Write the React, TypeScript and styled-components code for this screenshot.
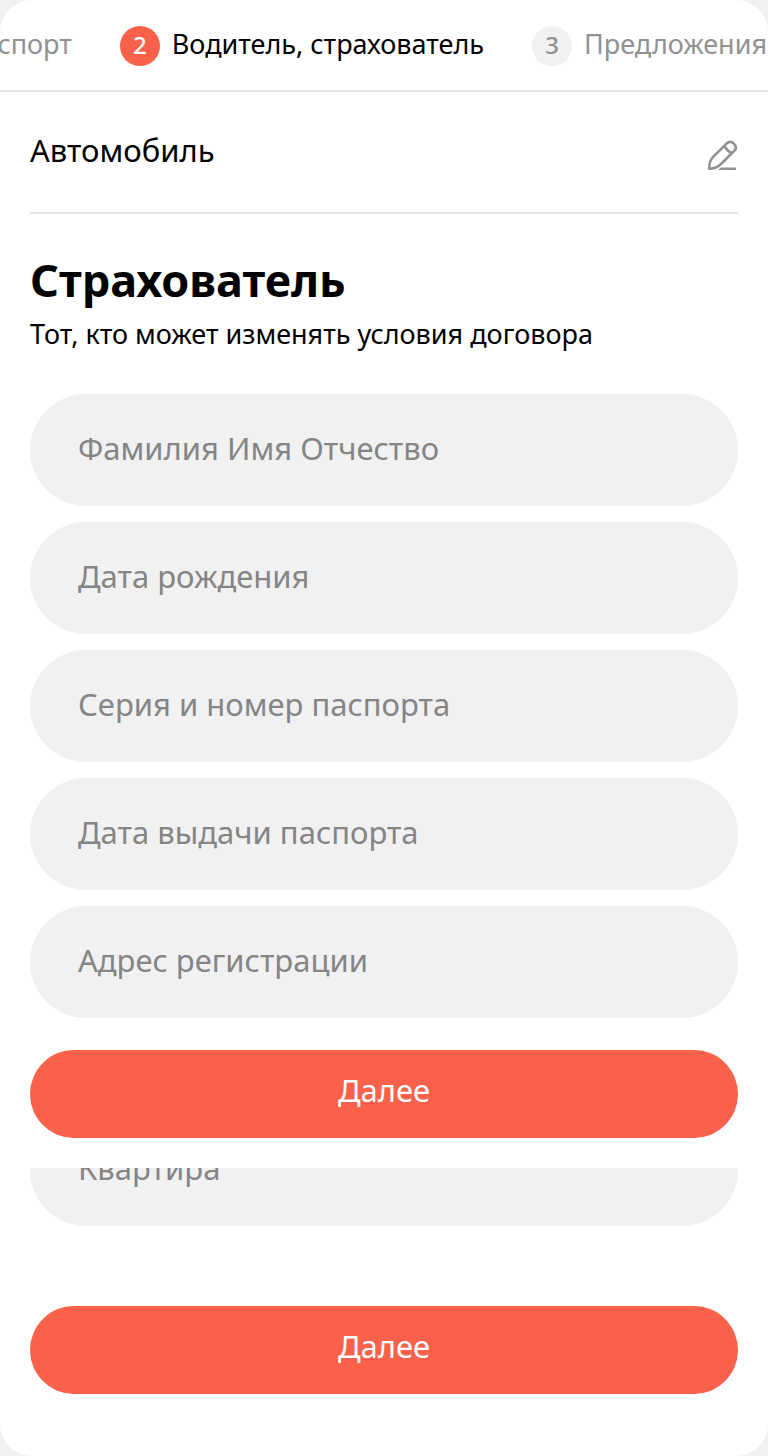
import React from "react";
import styled, { createGlobalStyle } from "styled-components";

const accent = "#fa614a";
const muted = "#858585";
const surface = "#f1f1f1";
const divider = "#e4e4e4";

const GlobalStyle = createGlobalStyle`
  *, *::before, *::after { box-sizing: border-box; }
  body {
    margin: 0;
    background: ${surface};
    color: #000;
    font-family: "Noto Sans", sans-serif;
  }
  button, input { font: inherit; }
`;

const Card = styled.main`
  background: #fff;
  border-radius: 32px;
  overflow: hidden;
  padding-bottom: 62px;
`;

const Stepper = styled.ol`
  display: flex;
  justify-content: flex-end;
  gap: 48px;
  height: 92px;
  margin: 0;
  padding: 0 1px 0 0;
  list-style: none;
  overflow: hidden;
  border-bottom: 2px solid ${divider};
`;

const Step = styled.li<{ $active?: boolean }>`
  display: flex;
  align-items: flex-start;
  gap: 12px;
  flex: none;
  padding-top: 24px;
  font-size: 27px;
  line-height: 40px;
  white-space: nowrap;
  color: ${(p) => (p.$active ? "#000" : "#919191")};
`;

const StepNumber = styled.span<{ $active?: boolean }>`
  width: 40px;
  height: 40px;
  margin-top: 2px;
  border-radius: 50%;
  text-align: center;
  font-size: 24px;
  line-height: 38px;
  font-weight: 500;
  background: ${(p) => (p.$active ? accent : surface)};
  color: ${(p) => (p.$active ? "#fff" : "#919191")};
`;

const Content = styled.form`
  padding: 0 30px;
`;

const Summary = styled.section`
  display: flex;
  justify-content: space-between;
  align-items: flex-start;
  height: 122px;
  padding-top: 34px;
  border-bottom: 2px solid ${divider};
`;

const SummaryTitle = styled.h2`
  margin: 0;
  font-size: 31px;
  font-weight: 400;
  line-height: 48px;
`;

const EditButton = styled.button`
  display: flex;
  margin-top: 14px;
  padding: 0;
  border: 0;
  background: none;
  color: #919191;
  cursor: pointer;
`;

const Title = styled.h1`
  margin: 38px 0 0;
  font-size: 45px;
  font-weight: 700;
  line-height: 56px;
`;

const Subtitle = styled.p`
  margin: 6px 0 40px;
  font-size: 27px;
  line-height: 40px;
`;

const Fields = styled.div`
  display: flex;
  flex-direction: column;
  gap: 16px;
`;

const Field = styled.input`
  display: block;
  flex: none;
  width: 100%;
  height: 112px;
  padding: 0 48px 4px;
  border: 0;
  border-radius: 56px;
  outline: none;
  background: ${surface};
  color: #000;
  font-size: 31px;
  &::placeholder { color: ${muted}; opacity: 1; }
`;

const ScrolledField = styled.div`
  display: flex;
  align-items: flex-end;
  height: 58px;
  margin: 30px 0 80px;
  overflow: hidden;
`;

const NextButton = styled.button`
  display: block;
  width: 100%;
  height: 88px;
  padding: 0 0 8px;
  border: 0;
  border-radius: 44px;
  background: ${accent};
  color: #fff;
  font-size: 31px;
  cursor: pointer;
`;

const Actions = styled.div`
  margin-top: 32px;
`;

const PencilIcon = () => (
  <svg width="32" height="32" viewBox="0 0 32 32" fill="none" stroke="currentColor" strokeWidth="2.6" aria-hidden="true">
    <path d="M3.2 28.7C3 24.4 4.4 19.6 7.4 16.6L20.8 3.4C23 1.4 25.8 1.6 28 3.8C30.2 6 30.4 8.6 28.4 10.7L15 24C12 27 7.7 28.9 3.2 28.7Z" />
    <path d="M18.6 5.8C19.8 9 22.8 12 26 13.2" />
    <path d="M12 30L15 27.4H30V30Z" fill="currentColor" stroke="none" />
  </svg>
);

const fields = [
  "Фамилия Имя Отчество",
  "Дата рождения",
  "Серия и номер паспорта",
  "Дата выдачи паспорта",
  "Адрес регистрации",
];

export default function App() {
  return (
    <>
      <GlobalStyle />
      <Card>
        <Stepper>
          <Step>Паспорт</Step>
          <Step $active aria-current="step">
            <StepNumber $active>2</StepNumber>
            Водитель, страхователь
          </Step>
          <Step>
            <StepNumber>3</StepNumber>
            Предложения
          </Step>
        </Stepper>
        <Content onSubmit={(e) => e.preventDefault()}>
          <Summary>
            <SummaryTitle>Автомобиль</SummaryTitle>
            <EditButton type="button" aria-label="Изменить">
              <PencilIcon />
            </EditButton>
          </Summary>
          <Title>Страхователь</Title>
          <Subtitle>Тот, кто может изменять условия договора</Subtitle>
          <Fields>
            {fields.map((label) => (
              <Field key={label} type="text" placeholder={label} aria-label={label} />
            ))}
          </Fields>
          <Actions>
            <NextButton type="submit">Далее</NextButton>
          </Actions>
          <ScrolledField>
            <Field type="text" placeholder="Квартира" aria-label="Квартира" />
          </ScrolledField>
          <NextButton type="submit">Далее</NextButton>
        </Content>
      </Card>
    </>
  );
}
